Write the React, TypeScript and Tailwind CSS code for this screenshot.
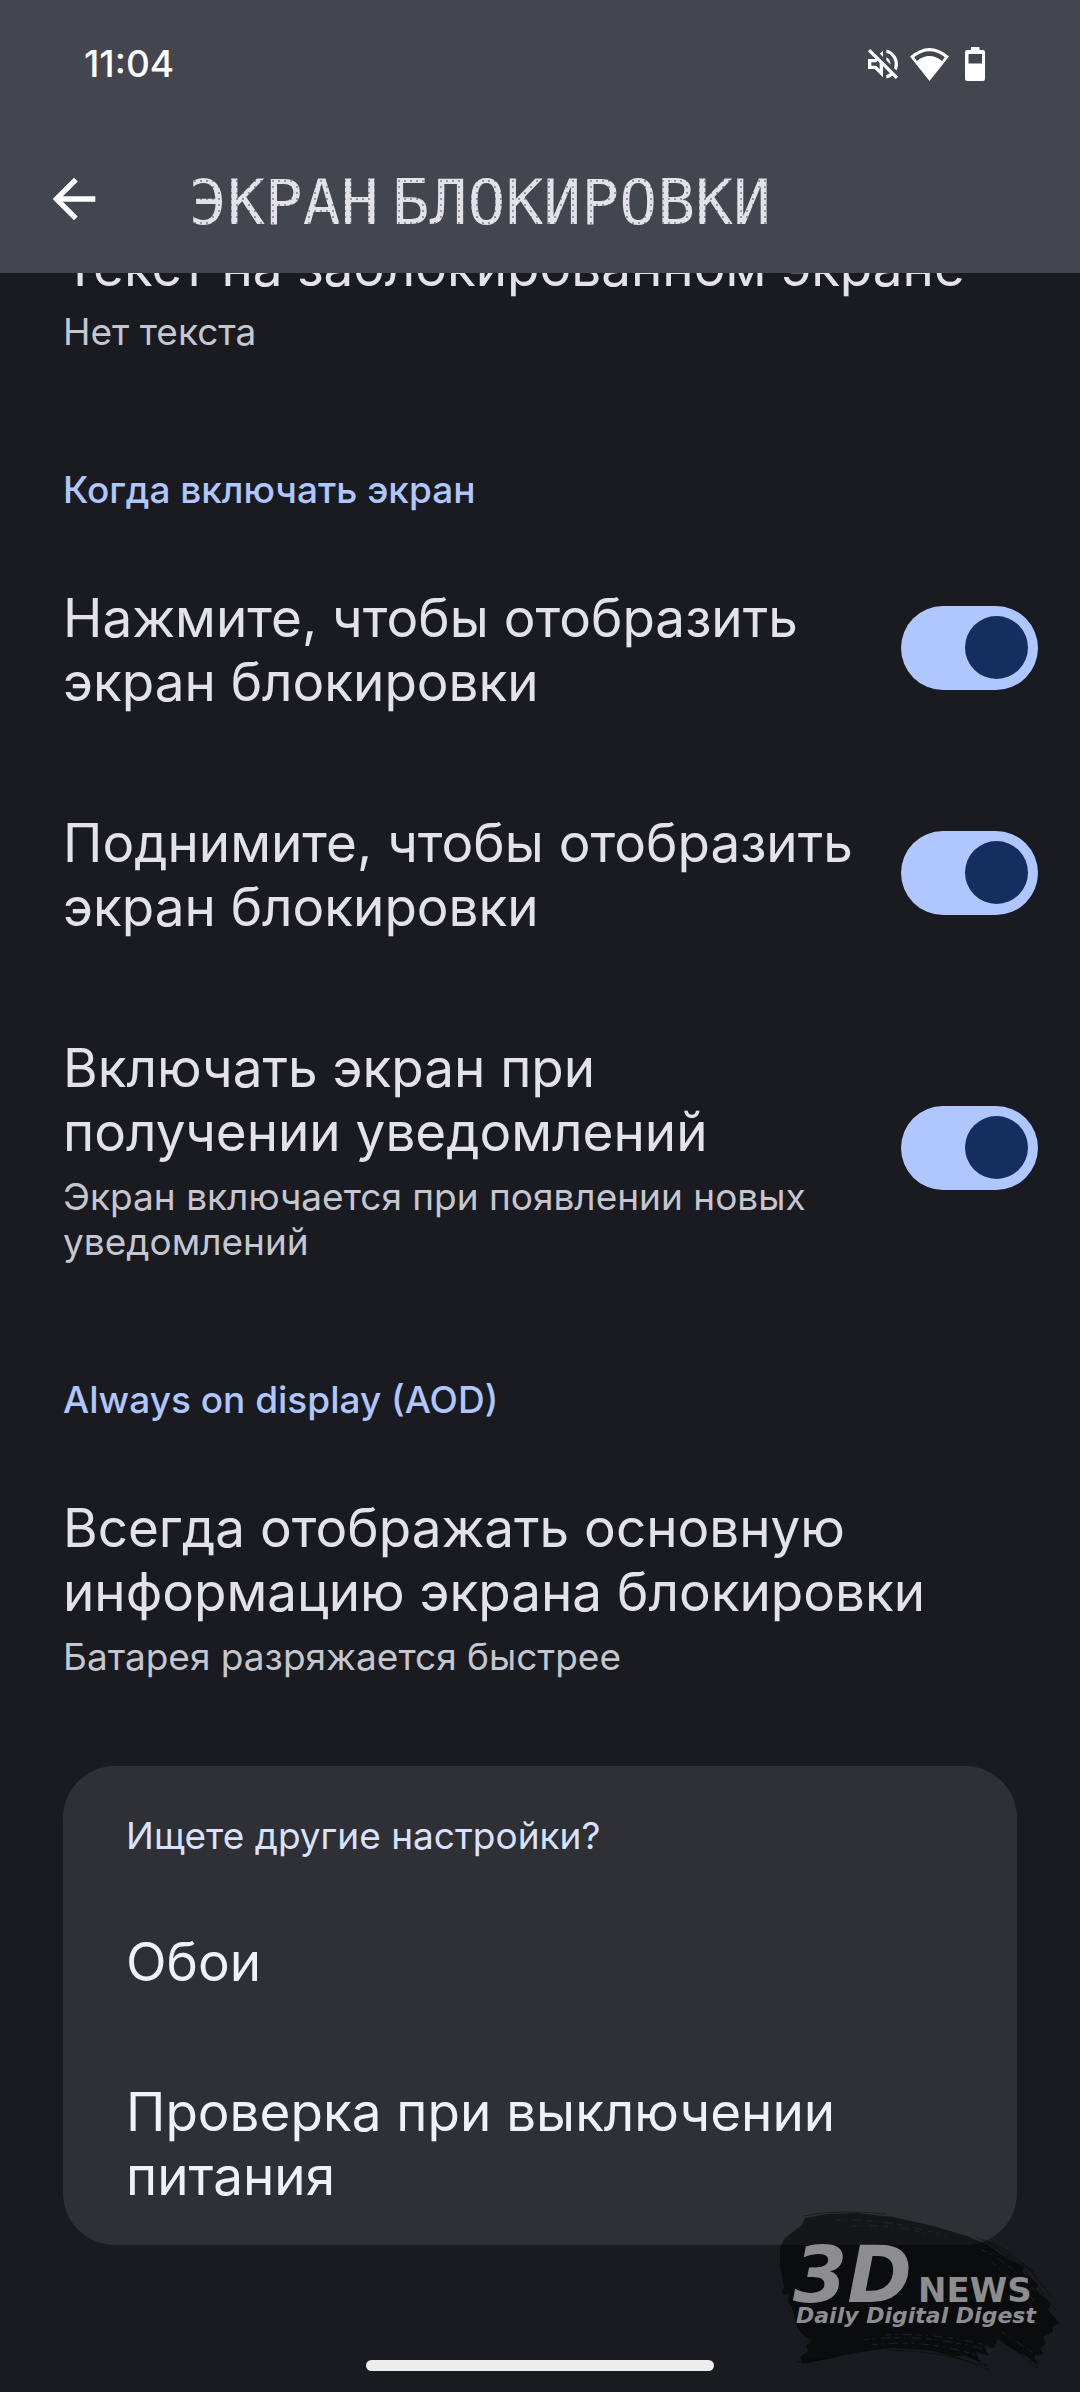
import { useState } from 'react'
import { MdArrowBack, MdOutlineVolumeOff } from 'react-icons/md'

const titleText = 'text-[53px] leading-[64px]'
const summaryText = 'text-[37px] leading-[45px]'

function WifiIcon() {
  return (
    <svg viewBox="0 0 39 33" className="w-[39px] h-[33px]" fill="currentColor" aria-hidden="true">
      <path fillRule="evenodd" d="M0 8.5Q19.5-8.5 39 8.5L19.5 33ZM4.3 9L6.8 13Q19.5 3 32.2 13L34.7 9Q19.5-2.5 4.3 9Z" />
    </svg>
  )
}

function BatteryIcon() {
  return (
    <svg viewBox="0 0 20 34" className="w-5 h-[34px]" fill="currentColor" aria-hidden="true">
      <path fillRule="evenodd" d="M6 0H14.5V3H18Q20 3 20 5V32Q20 34 18 34H2Q0 34 0 32V5Q0 3 2 3H6ZM3.5 7V16.5H17V7Z" />
    </svg>
  )
}

function SwitchRow({ id, title, summary }: { id: string; title: string; summary?: string }) {
  const [on, setOn] = useState(true)
  return (
    <div className="flex items-center gap-[42px] pl-[63px] pr-[42px]">
      <label htmlFor={id} className="flex-1 pt-[51px] pb-[46px]">
        <span className={'block ' + titleText}>{title}</span>
        {summary && <span className={'block mt-[10px] text-[#c5c6d0] ' + summaryText}>{summary}</span>}
      </label>
      <input id={id} type="checkbox" role="switch" checked={on} onChange={e => setOn(e.target.checked)}
        className="appearance-none shrink-0 flex items-center w-[137px] h-[84px] px-[10px] rounded-full bg-[#46464f] checked:bg-[#b0c6ff] checked:justify-end before:block before:size-[63px] before:rounded-full before:bg-[#8f909a] checked:before:bg-[#152e60]" />
    </div>
  )
}

function Category({ children }: { children: string }) {
  return <h2 className={'px-[63px] font-medium text-[#b0c6ff] ' + summaryText}>{children}</h2>
}

function Watermark() {
  return (
    <svg viewBox="0 0 290 166" className="absolute right-[14px] bottom-5 w-[290px] h-[166px]" role="img" aria-label="3DNews Daily Digital Digest">
      {/* brush stroke */}
      <path fill="#000" fillOpacity=".54" d="M29 12L51 8 81 7 117 11 157 20 191 30 212 39 232 53 248 60 246 66 262 78 260 84 275 98 272 104 284 117 276 121 277 126 267 131 270 138 264 142 268 148 258 150 262 160 250 150 237 144 222 133 218 142 208 140 213 150 200 146 204 156 190 150 174 150 157 145 117 142 84 146 51 153 27 158 24 151 32 145 30 140 36 134 28 130 21 121 16 101 12 96 13 88 6 88 8 80 4 60 4 41 9 32 26 19Z" />
      <g fill="none" stroke="#000" strokeOpacity=".4" strokeWidth="1">
        <path d="M27 10Q60 3 110 8M206 33Q236 43 262 72M200 31Q240 50 268 88M250 60L280 96M262 84L280 104M212 36L258 66M226 132L262 163M240 140L264 157M176 150L214 164M190 148L212 160M110 144Q160 144 210 160M20 156L60 151" />
      </g>
      <g fill="none" stroke="#2b2c31" strokeOpacity=".7" strokeWidth="1" strokeDasharray="5 4 2 6 9 5">
        <path d="M60 14Q110 12 170 30M76 20Q120 18 150 28M206 44Q236 58 260 86M216 56L262 98M222 70L256 100M88 134Q150 126 218 146M96 139Q150 132 206 151M110 129Q160 126 214 140M226 126L262 150" />
      </g>
      <g fill="#8d8d8f" fontFamily="'DejaVu Sans', sans-serif" fontWeight="bold">
        <text x="17" y="96" fontSize="78" fontStyle="italic">3D</text>
        <text x="142" y="96" fontSize="34">NEWS</text>
        <text x="20" y="117" fontSize="22" fontStyle="italic">Daily Digital Digest</text>
      </g>
    </svg>
  )
}

export default function App() {
  return (
    <div className="relative min-h-screen bg-[#1a1b20] text-[#e2e2e8] font-['Inter','Noto_Sans',sans-serif]">
      <header className="sticky top-0 z-10 bg-[#44464f]">
        <div className="flex items-center justify-between h-32 pl-[84px] pr-[95px] text-white">
          <time className="text-[37px] font-medium">11:04</time>
          <div className="flex items-center">
            <MdOutlineVolumeOff className="size-10 mr-[7px]" />
            <WifiIcon />
            <span className="w-4" />
            <BatteryIcon />
          </div>
        </div>
        <div className="flex items-center h-[145px] pl-[42px] pb-1">
          <button aria-label="Назад" className="text-white mr-[83px]"><MdArrowBack className="size-16" /></button>
          {/* dot-matrix look: the letters are filled with a grid of dots */}
          <h1 className="flex gap-[13px] pt-2 font-['DejaVu_Sans_Mono',monospace] text-[63px] leading-[76px] text-transparent bg-clip-text bg-[radial-gradient(circle,#e2e2e8_3px,#e2e2e822_4px)] bg-[length:6px_6px]">
            <span>ЭКРАН</span> <span>БЛОКИРОВКИ</span>
          </h1>
        </div>
      </header>

      <main className="-mt-[38px] pb-[147px]">
        <div className="px-[63px]">
          <div className={titleText}>Текст на заблокированном экране</div>
          <div className={'mt-[10px] text-[#c5c6d0] ' + summaryText}>Нет текста</div>
        </div>

        <section className="pt-[113px]">
          <Category>Когда включать экран</Category>
          <div className="pt-[23px]">
            <SwitchRow id="tap" title="Нажмите, чтобы отобразить экран блокировки" />
            <SwitchRow id="lift" title="Поднимите, чтобы отобразить экран блокировки" />
            <SwitchRow id="notify" title="Включать экран при получении уведомлений" summary="Экран включается при появлении новых уведомлений" />
          </div>
        </section>

        <section className="pt-[67px]">
          <Category>Always on display (AOD)</Category>
          <div className="px-[63px] pt-[74px]">
            <div className={titleText}>Всегда отображать основную информацию экрана блокировки</div>
            <div className={'mt-[10px] text-[#c5c6d0] ' + summaryText}>Батарея разряжается быстрее</div>
          </div>
        </section>

        <section className="mx-[63px] mt-[87px] px-[63px] pt-[47px] pb-[37px] rounded-[52px] bg-[#2f3035] text-[#f0f0f7]">
          <h2 className={'text-[#d9e2ff] ' + summaryText}>Ищете другие настройки?</h2>
          <a href="#wallpaper" className={'block mt-[72px] ' + titleText}>Обои</a>
          <a href="#power" className={'block mt-[86px] ' + titleText}>Проверка при выключении питания</a>
        </section>
      </main>

      <Watermark />
      <div className="absolute bottom-[21px] left-1/2 -translate-x-1/2 w-[348px] h-[11px] rounded-full bg-[#ececec]" />
    </div>
  )
}
